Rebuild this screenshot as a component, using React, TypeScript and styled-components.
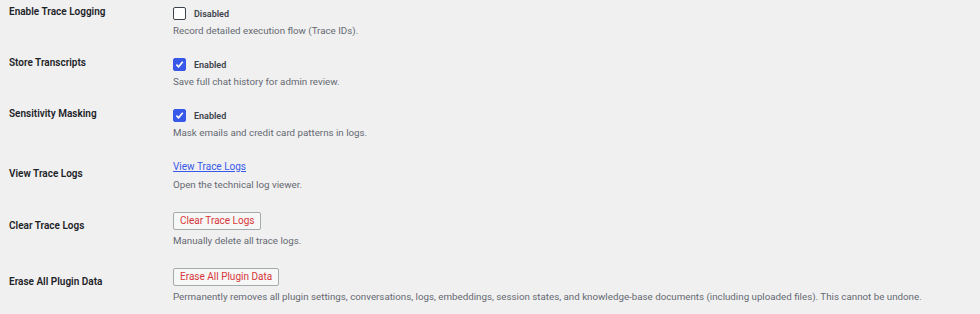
import styled, { createGlobalStyle } from "styled-components";

const GlobalStyle = createGlobalStyle`
  html, body {
    margin: 0;
    padding: 0;
    background: #f0f0f1;
  }
  body {
    font-family: Roboto, "Liberation Sans", Arial, sans-serif;
    color: #1d2327;
  }
`;

const Table = styled.div`
  display: flex;
  flex-direction: column;
  padding-left: 9px;
`;

const Row = styled.div`
  display: grid;
  grid-template-columns: 164px 1fr;
  align-items: start;
  padding: 7px 0 13px;
`;

const Label = styled.div<{ $top: number }>`
  margin-top: ${(p) => p.$top - 7}px;
  font-size: 10px;
  font-weight: 600;
  line-height: 14px;
  color: #1d2327;
`;

const Field = styled.div`
  display: flex;
  flex-direction: column;
  align-items: flex-start;
`;

const CheckLine = styled.label`
  display: flex;
  align-items: center;
  gap: 8px;
  height: 13px;
  font-size: 9px;
  font-weight: 600;
  color: #3c434a;
`;

const Box = styled.span<{ $checked?: boolean }>`
  width: 13px;
  height: 13px;
  box-sizing: border-box;
  border-radius: 2px;
  border: 1px solid ${(p) => (p.$checked ? "#3858e9" : "#3c434a")};
  background: ${(p) => (p.$checked ? "#3858e9" : "#fff")};
  display: flex;
  align-items: center;
  justify-content: center;
`;

const Desc = styled.p`
  margin: 4px 0 0;
  font-size: 9.75px;
  line-height: 14px;
  color: #646970;
`;

const Link = styled.a`
  font-size: 10px;
  line-height: 14px;
  color: #3858e9;
  text-decoration: underline;
`;

const DangerButton = styled.button`
  height: 18px;
  padding: 0 6px;
  box-sizing: border-box;
  border: 1px solid #a7aaad;
  border-radius: 2px;
  background: #f6f7f7;
  color: #d63638;
  font-family: inherit;
  font-size: 10px;
  line-height: 16px;
`;

const Check = () => (
  <svg width="9" height="9" viewBox="0 0 10 10">
    <path d="M1.5 5.2 L4 7.6 L8.6 2" fill="none" stroke="#fff" strokeWidth="1.9" />
  </svg>
);

const checks = [
  { label: "Enable Trace Logging", on: false, desc: "Record detailed execution flow (Trace IDs)." },
  { label: "Store Transcripts", on: true, desc: "Save full chat history for admin review." },
  { label: "Sensitivity Masking", on: true, desc: "Mask emails and credit card patterns in logs." },
];

export default function App() {
  return (
    <>
      <GlobalStyle />
      <Table>
        {checks.map((c) => (
          <Row key={c.label}>
            <Label $top={5}>{c.label}</Label>
            <Field>
              <CheckLine>
                <Box $checked={c.on}>{c.on && <Check />}</Box>
                {c.on ? "Enabled" : "Disabled"}
              </CheckLine>
              <Desc>{c.desc}</Desc>
            </Field>
          </Row>
        ))}
        <Row>
          <Label $top={14}>View Trace Logs</Label>
          <Field>
            <Link href="#">View Trace Logs</Link>
            <Desc>Open the technical log viewer.</Desc>
          </Field>
        </Row>
        <Row>
          <Label $top={14}>Clear Trace Logs</Label>
          <Field>
            <DangerButton>Clear Trace Logs</DangerButton>
            <Desc>Manually delete all trace logs.</Desc>
          </Field>
        </Row>
        <Row>
          <Label $top={14}>Erase All Plugin Data</Label>
          <Field>
            <DangerButton>Erase All Plugin Data</DangerButton>
            <Desc>
              Permanently removes all plugin settings, conversations, logs, embeddings, session
              states, and knowledge-base documents (including uploaded files). This cannot be
              undone.
            </Desc>
          </Field>
        </Row>
      </Table>
    </>
  );
}
